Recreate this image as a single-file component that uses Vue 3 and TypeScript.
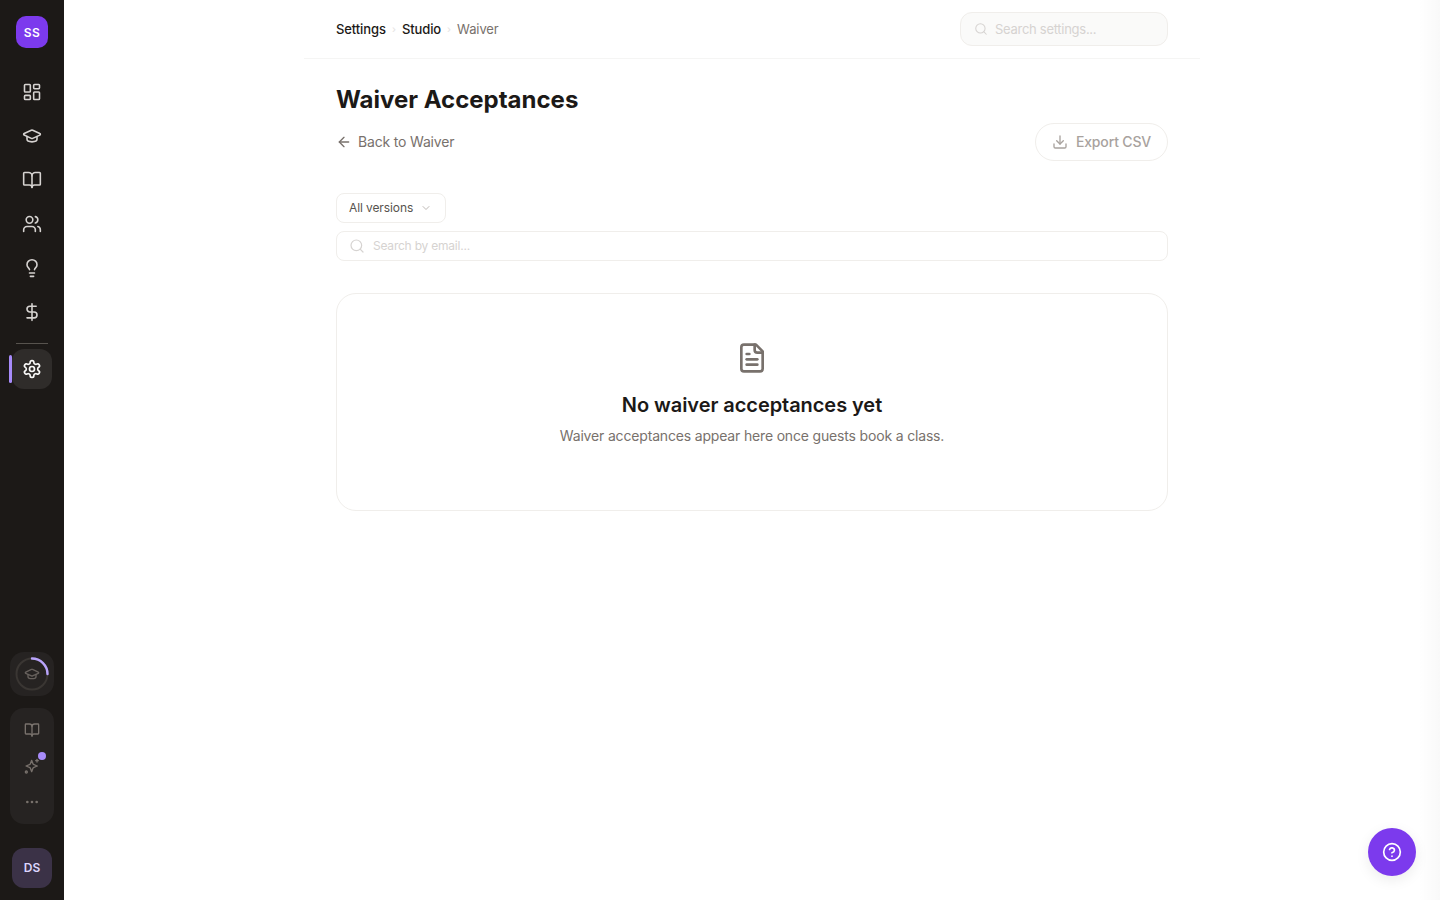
<script setup lang="ts">
const navItems = ["grid", "cap", "book", "users", "bulb", "dollar"];
</script>

<template>
  <div class="shell">
    <aside class="rail">
      <div class="logo">SS</div>
      <nav class="nav">
        <button v-for="item in navItems" :key="item" class="nav-btn">
          <svg viewBox="0 0 24 24" class="icon">
            <template v-if="item === 'grid'">
              <rect x="3" y="3" width="7" height="9" rx="1" />
              <rect x="14" y="3" width="7" height="5" rx="1" />
              <rect x="14" y="12" width="7" height="9" rx="1" />
              <rect x="3" y="16" width="7" height="5" rx="1" />
            </template>
            <template v-else-if="item === 'cap'">
              <path d="M21.42 10.92a1 1 0 0 0-.02-1.84l-8.57-3.9a2 2 0 0 0-1.66 0l-8.57 3.9a1 1 0 0 0 0 1.83l8.57 3.91a2 2 0 0 0 1.66 0z" />
              <path d="M6 12.5V16a6 3 0 0 0 12 0v-3.5" />
            </template>
            <template v-else-if="item === 'book'">
              <path d="M12 7v14" />
              <path d="M3 18a1 1 0 0 1-1-1V4a1 1 0 0 1 1-1h5a4 4 0 0 1 4 4 4 4 0 0 1 4-4h5a1 1 0 0 1 1 1v13a1 1 0 0 1-1 1h-6a3 3 0 0 0-3 3 3 3 0 0 0-3-3z" />
            </template>
            <template v-else-if="item === 'users'">
              <path d="M16 21v-2a4 4 0 0 0-4-4H6a4 4 0 0 0-4 4v2" />
              <circle cx="9" cy="7" r="4" />
              <path d="M22 21v-2a4 4 0 0 0-3-3.87" />
              <path d="M16 3.13a4 4 0 0 1 0 7.75" />
            </template>
            <template v-else-if="item === 'bulb'">
              <path d="M15 14c.2-1 .7-1.7 1.5-2.5 1-.9 1.5-2.2 1.5-3.5A6 6 0 0 0 6 8c0 1 .2 2.2 1.5 3.5.7.7 1.3 1.5 1.5 2.5" />
              <path d="M9 18h6" />
              <path d="M10 22h4" />
            </template>
            <template v-else>
              <line x1="12" x2="12" y1="2" y2="22" />
              <path d="M17 5H9.5a3.5 3.5 0 0 0 0 7h5a3.5 3.5 0 0 1 0 7H6" />
            </template>
          </svg>
        </button>
      </nav>
      <div class="rail-divider"></div>
      <div class="active-wrap">
        <span class="active-bar"></span>
        <button class="nav-btn active">
          <svg viewBox="0 0 24 24" class="icon bright">
            <path d="M12.22 2h-.44a2 2 0 0 0-2 2v.18a2 2 0 0 1-1 1.73l-.43.25a2 2 0 0 1-2 0l-.15-.08a2 2 0 0 0-2.73.73l-.22.38a2 2 0 0 0 .73 2.73l.15.1a2 2 0 0 1 1 1.72v.51a2 2 0 0 1-1 1.74l-.15.09a2 2 0 0 0-.73 2.73l.22.38a2 2 0 0 0 2.73.73l.15-.08a2 2 0 0 1 2 0l.43.25a2 2 0 0 1 1 1.73V20a2 2 0 0 0 2 2h.44a2 2 0 0 0 2-2v-.18a2 2 0 0 1 1-1.73l.43-.25a2 2 0 0 1 2 0l.15.08a2 2 0 0 0 2.73-.73l.22-.39a2 2 0 0 0-.73-2.73l-.15-.08a2 2 0 0 1-1-1.74v-.5a2 2 0 0 1 1-1.74l.15-.09a2 2 0 0 0 .73-2.73l-.22-.38a2 2 0 0 0-2.73-.73l-.15.08a2 2 0 0 1-2 0l-.43-.25a2 2 0 0 1-1-1.73V4a2 2 0 0 0-2-2z" />
            <circle cx="12" cy="12" r="3" />
          </svg>
        </button>
      </div>

      <div class="rail-bottom">
        <div class="progress-card">
          <svg viewBox="0 0 36 36" class="ring">
            <circle cx="18" cy="18" r="15.5" class="ring-track" />
            <path d="M18 2.5A15.5 15.5 0 0 1 33.5 18" class="ring-value" />
          </svg>
          <svg viewBox="0 0 24 24" class="icon dim ring-icon">
            <path d="M21.42 10.92a1 1 0 0 0-.02-1.84l-8.57-3.9a2 2 0 0 0-1.66 0l-8.57 3.9a1 1 0 0 0 0 1.83l8.57 3.91a2 2 0 0 0 1.66 0z" />
            <path d="M6 12.5V16a6 3 0 0 0 12 0v-3.5" />
          </svg>
        </div>
        <div class="tools-card">
          <div class="tool">
            <svg viewBox="0 0 24 24" class="icon dim">
              <path d="M12 7v14" />
              <path d="M3 18a1 1 0 0 1-1-1V4a1 1 0 0 1 1-1h5a4 4 0 0 1 4 4 4 4 0 0 1 4-4h5a1 1 0 0 1 1 1v13a1 1 0 0 1-1 1h-6a3 3 0 0 0-3 3 3 3 0 0 0-3-3z" />
            </svg>
          </div>
          <div class="tool">
            <svg viewBox="0 0 24 24" class="icon dim">
              <path d="M11.5 3.5l1.9 5.1a2.5 2.5 0 0 0 1.5 1.5l5.1 1.9-5.1 1.9a2.5 2.5 0 0 0-1.5 1.5l-1.9 5.1-1.9-5.1a2.5 2.5 0 0 0-1.5-1.5L3 12l5.1-1.9a2.5 2.5 0 0 0 1.5-1.5z" />
              <path d="M19.5 2v4" />
              <path d="M17.5 4h4" />
              <circle cx="3.5" cy="21" r="1.5" />
            </svg>
            <span class="dot"></span>
          </div>
          <div class="tool">
            <svg viewBox="0 0 24 24" class="icon dim">
              <circle cx="12" cy="12" r="1" />
              <circle cx="19" cy="12" r="1" />
              <circle cx="5" cy="12" r="1" />
            </svg>
          </div>
        </div>
        <div class="user"><span class="t">DS</span></div>
      </div>
    </aside>

    <main class="content">
      <div class="column">
        <header class="topbar">
          <div class="crumbs">
            <span>Settings</span>
            <span class="sep">›</span>
            <span>Studio</span>
            <span class="sep">›</span>
            <span class="current">Waiver</span>
          </div>
          <div class="top-search">
            <svg viewBox="0 0 24 24" class="search-icon small">
              <circle cx="11" cy="11" r="8" />
              <path d="m21 21-4.3-4.3" />
            </svg>
            <span>Search settings...</span>
          </div>
        </header>

        <section class="body">
          <h1>Waiver Acceptances</h1>
          <div class="action-row">
            <a class="back">
              <svg viewBox="0 0 24 24" class="back-icon">
                <path d="m12 19-7-7 7-7" />
                <path d="M19 12H5" />
              </svg>
              <span class="t">Back to Waiver</span>
            </a>
            <button class="export">
              <svg viewBox="0 0 24 24" class="export-icon">
                <path d="M12 15V3" />
                <path d="M21 15v4a2 2 0 0 1-2 2H5a2 2 0 0 1-2-2v-4" />
                <path d="m7 10 5 5 5-5" />
              </svg>
              <span class="t">Export CSV</span>
            </button>
          </div>

          <div class="filters">
            <button class="select">
              <span class="t">All versions</span>
              <svg viewBox="0 0 24 24" class="chev"><path d="m6 9 6 6 6-6" /></svg>
            </button>
            <div class="email-search">
              <svg viewBox="0 0 24 24" class="search-icon">
                <circle cx="11" cy="11" r="8" />
                <path d="m21 21-4.3-4.3" />
              </svg>
              <span class="t">Search by email...</span>
            </div>
          </div>

          <div class="empty">
            <svg viewBox="0 0 24 24" class="doc">
              <path d="M15 2H6a2 2 0 0 0-2 2v16a2 2 0 0 0 2 2h12a2 2 0 0 0 2-2V7Z" />
              <path d="M14 2v4a2 2 0 0 0 2 2h4" />
              <path d="M10 9H8" />
              <path d="M16 13H8" />
              <path d="M16 17H8" />
            </svg>
            <h2>No waiver acceptances yet</h2>
            <p>Waiver acceptances appear here once guests book a class.</p>
          </div>
        </section>
      </div>
    </main>

    <button class="help">
      <svg viewBox="0 0 24 24" class="help-icon">
        <circle cx="12" cy="12" r="10" />
        <path d="M9.09 9a3 3 0 0 1 5.83 1c0 2-3 3-3 3" />
        <path d="M12 17h.01" />
      </svg>
    </button>
    <div class="edge"></div>
  </div>
</template>

<style>
html,
body {
  margin: 0;
  background: #fff;
}
</style>

<style scoped>
.shell {
  display: flex;
  height: 900px;
  overflow: hidden;
  position: relative;
  font-family: "Inter", "Liberation Sans", sans-serif;
  color: #1c1917;
}

svg {
  fill: none;
  stroke: currentColor;
  stroke-linecap: round;
  stroke-linejoin: round;
  stroke-width: 2;
  display: block;
}

button {
  font-family: inherit;
  background: none;
  border: 0;
  padding: 0;
}

/* Inter sits a pixel lower than the reference type in a centred row */
.t {
  padding-bottom: 2px;
}

.rail {
  width: 64px;
  flex: none;
  background: #1c1917;
  display: flex;
  flex-direction: column;
  align-items: center;
  padding-top: 16px;
  box-sizing: border-box;
}

.logo {
  width: 32px;
  height: 32px;
  border-radius: 10px;
  background: #7c3aed;
  color: #fff;
  font-size: 12px;
  font-weight: 600;
  display: flex;
  align-items: center;
  justify-content: center;
  letter-spacing: 0.4px;
  margin-bottom: 24px;
}

.nav {
  display: flex;
  flex-direction: column;
  gap: 4px;
}

.nav-btn {
  width: 40px;
  height: 40px;
  border-radius: 12px;
  display: flex;
  align-items: center;
  justify-content: center;
}

.nav-btn.active {
  background: #2f2c2a;
}

.icon {
  width: 20px;
  height: 20px;
  color: #d6d3d1;
  stroke-width: 1.9;
}

.icon.bright {
  color: #fafaf9;
  stroke-width: 2;
}

.icon.dim {
  width: 16px;
  height: 16px;
  color: #78716c;
  stroke-width: 2;
}

.rail-divider {
  width: 32px;
  height: 1px;
  background: #57534e;
  margin: 11px 0 5px;
}

.active-wrap {
  position: relative;
}

.active-bar {
  position: absolute;
  left: -3px;
  top: 6px;
  width: 3px;
  height: 28px;
  border-radius: 2px;
  background: #a78bfa;
}

.rail-bottom {
  margin-top: auto;
  display: flex;
  flex-direction: column;
  align-items: center;
  padding-bottom: 12px;
}

.progress-card {
  width: 44px;
  height: 44px;
  border-radius: 14px;
  background: #262322;
  position: relative;
  display: flex;
  align-items: center;
  justify-content: center;
  margin-bottom: 12px;
}

.ring {
  width: 36px;
  height: 36px;
  position: absolute;
  left: 4px;
  top: 4px;
}

.ring-track {
  stroke: #3a3633;
  stroke-width: 2;
}

.ring-value {
  stroke: #b9a4fb;
  stroke-width: 2.4;
}

.ring-icon {
  color: #a8a29e;
  opacity: 0.8;
}

.tools-card {
  width: 44px;
  height: 116px;
  border-radius: 14px;
  background: #262322;
  display: flex;
  flex-direction: column;
  align-items: center;
  padding-top: 4px;
  box-sizing: border-box;
  margin-bottom: 24px;
}

.tool {
  width: 36px;
  height: 36px;
  display: flex;
  align-items: center;
  justify-content: center;
  position: relative;
}

.dot {
  position: absolute;
  top: 4px;
  right: 4px;
  width: 8px;
  height: 8px;
  border-radius: 50%;
  background: #a78bfa;
}

.user {
  width: 40px;
  height: 40px;
  border-radius: 12px;
  background: #3b3247;
  color: #ddd6fe;
  font-size: 12px;
  font-weight: 600;
  display: flex;
  align-items: center;
  justify-content: center;
}

.content {
  flex: 1;
  display: flex;
  justify-content: center;
  min-width: 0;
}

.column {
  width: 896px;
}

.topbar {
  height: 59px;
  box-sizing: border-box;
  border-bottom: 1px solid #f5f5f4;
  padding: 0 32px;
  display: flex;
  align-items: center;
  justify-content: space-between;
}

.crumbs {
  display: flex;
  align-items: center;
  font-size: 13px;
  font-weight: 500;
  letter-spacing: -0.1px;
  gap: 6px;
  padding-bottom: 1px;
}

.sep {
  color: #e7e5e4;
  font-size: 10px;
  width: 4px;
}

.current {
  color: #78716c;
  font-weight: 400;
}

.top-search {
  width: 208px;
  height: 34px;
  box-sizing: border-box;
  border: 1px solid #f0eeeb;
  border-radius: 12px;
  background: #fafaf9;
  display: flex;
  align-items: center;
  gap: 7px;
  padding-left: 13px;
  font-size: 13px;
  letter-spacing: -0.28px;
  color: #d6d3d1;
}

.search-icon {
  width: 16px;
  height: 16px;
  color: #d6d3d1;
  stroke-width: 1.8;
}

.search-icon.small {
  width: 14px;
  height: 14px;
}

.body {
  padding: 24px 32px 0;
}

h1 {
  margin: 0;
  font-size: 24px;
  line-height: 33px;
  font-weight: 700;
  letter-spacing: 0;
}

.action-row {
  display: flex;
  align-items: center;
  justify-content: space-between;
  margin-top: 7px;
}

.back {
  display: flex;
  align-items: center;
  gap: 6px;
  font-size: 14px;
  color: #78716c;
  letter-spacing: -0.18px;
}

.back-icon {
  width: 16px;
  height: 16px;
  color: #78716c;
}

.export {
  height: 38px;
  width: 133px;
  box-sizing: border-box;
  border: 1px solid #f0eeeb;
  border-radius: 19px;
  background: #fff;
  display: flex;
  align-items: center;
  justify-content: center;
  gap: 8px;
  font-size: 14px;
  font-weight: 500;
  color: #a8a29e;
  letter-spacing: -0.15px;
}

.export-icon {
  width: 16px;
  height: 16px;
  color: #a8a29e;
}

.filters {
  margin-top: 32px;
  display: flex;
  flex-direction: column;
  align-items: flex-start;
  gap: 8px;
}

.select {
  height: 30px;
  width: 110px;
  box-sizing: border-box;
  border: 1px solid #f0eeeb;
  border-radius: 8px;
  background: #fff;
  display: flex;
  align-items: center;
  padding-left: 12px;
  gap: 7px;
  font-size: 12px;
  color: #57534e;
  letter-spacing: -0.1px;
}

.chev {
  width: 12px;
  height: 12px;
  color: #a8a29e;
  stroke-width: 1.5;
}

.email-search {
  width: 100%;
  height: 30px;
  box-sizing: border-box;
  border: 1px solid #f0eeeb;
  border-radius: 8px;
  display: flex;
  align-items: center;
  gap: 8px;
  padding-left: 12px;
  font-size: 12px;
  color: #d6d3d1;
  letter-spacing: -0.22px;
}

.empty {
  margin-top: 32px;
  height: 218px;
  box-sizing: border-box;
  border: 1px solid #f0eeeb;
  border-radius: 20px;
  display: flex;
  flex-direction: column;
  align-items: center;
  padding-top: 48px;
}

.doc {
  width: 32px;
  height: 32px;
  color: #78716c;
  stroke-width: 2;
}

h2 {
  margin: 17px 0 0;
  font-size: 20px;
  line-height: 28px;
  font-weight: 600;
  letter-spacing: -0.06px;
}

p {
  margin: 7px 0 0;
  font-size: 14px;
  line-height: 20px;
  color: #78716c;
  letter-spacing: -0.17px;
}

.help {
  position: absolute;
  left: 1368px;
  top: 828px;
  width: 48px;
  height: 48px;
  border-radius: 50%;
  background: #7c3aed;
  box-shadow: 0 4px 14px rgba(0, 0, 0, 0.08);
  display: flex;
  align-items: center;
  justify-content: center;
}

.help-icon {
  width: 20px;
  height: 20px;
  color: #fff;
}

.edge {
  position: absolute;
  right: 0;
  top: 0;
  bottom: 0;
  width: 22px;
  background: linear-gradient(to right, rgba(0, 0, 0, 0), rgba(0, 0, 0, 0.025));
}
</style>
